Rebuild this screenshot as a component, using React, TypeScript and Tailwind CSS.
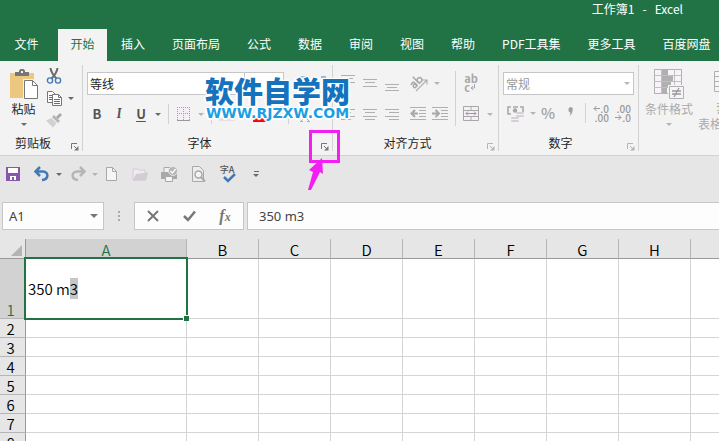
import React from 'react';

type IconProps = {
  children: React.ReactNode;
  w?: number;
  h?: number;
};

function Icon({ children, w = 16, h = 16 }: IconProps) {
  return <svg width={w} height={h} viewBox={`0 0 ${w} ${h}`} fill="none" className="shrink-0" aria-hidden="true">
      {children}
    </svg>;
}

function Caret({ className = 'text-[#6a6a6a]' }: { className?: string }) {
  return <svg width="6" height="3" viewBox="0 0 6 3" className={`shrink-0 ${className}`} aria-hidden="true">
      <path d="M0 0h6L3 3z" fill="currentColor" />
    </svg>;
}

type ToolProps = {
  label: string;
  className?: string;
  children: React.ReactNode;
};

function Tool({ label, className = 'w-[22px]', children }: ToolProps) {
  return <button type="button" aria-label={label} className={`flex h-6 shrink-0 items-center justify-center ${className}`}>
      {children}
    </button>;
}

function Divider() {
  return <div className="mx-1 h-5 w-px shrink-0 bg-[#d2d2d2]" />;
}

type GroupProps = {
  title: string;
  className: string;
  dim?: boolean;
  marker?: React.ReactNode;
  children: React.ReactNode;
};

function Group({ title, className, dim, marker, children }: GroupProps) {
  return <section aria-label={title} className={`flex shrink-0 flex-col border-r border-[#d2d2d2] ${className}`}>
      {children}
      <div className="mt-auto flex h-4 items-center">
        <span className="flex-1 text-center text-[#262626]">{title}</span>
        <button type="button" aria-label={`${title}设置`} className={`relative flex h-4 w-4 items-end justify-end pr-[3px] ${dim ? 'text-[#b5b5b5]' : 'text-[#777]'}`}>
          <Icon w={8} h={8}>
            <path d="M.5 6V.5H6" stroke="currentColor" />
            <path d="M3 3l3 3" stroke="currentColor" />
            <path d="M7.500 3v4.500H3z" fill="currentColor" />
          </Icon>
          {marker}
        </button>
      </div>
    </section>;
}

// frame and arrow pointing at the font dialog launcher
function Marker() {
  return <span className="pointer-events-none absolute -top-[5px] -left-[7px] z-20 block h-[33px] w-[31px] border-[3px] border-[#f31ef3]">
      <svg width="18" height="34" viewBox="0 0 18 34" className="absolute top-6 -left-1" aria-hidden="true">
        <path d="M14 1L15 17L12 15L3 33L0 33L5 15L1 13z" fill="#f31ef3" />
      </svg>
    </span>;
}

const tabs = ['插入', '页面布局', '公式', '数据', '审阅', '视图', '帮助', 'PDF工具集', '更多工具', '百度网盘'];

function TitleBar() {
  return <header className="bg-[#217346] text-white">
      <h1 className="flex h-[29px] justify-end gap-2 pr-9 leading-[18px]">
        <span>工作簿1</span>
        <span>-</span>
        <span>Excel</span>
      </h1>
      <nav className="flex h-8 gap-px overflow-hidden whitespace-nowrap">
        <button type="button" className="w-[57px] shrink-0 pr-1 pb-0.5">文件</button>
        <button type="button" className="w-[49px] shrink-0 bg-[#f3f3f3] pb-0.5 text-[#217346]">开始</button>
        {tabs.map(tab => <button type="button" key={tab} className="shrink-0 px-[13px] pb-0.5">
            {tab}
          </button>)}
      </nav>
    </header>;
}

function ClipboardGroup() {
  return <Group title="剪贴板" className="w-[83px]">
      <div className="flex items-start gap-1 pl-[9px]">
        <button type="button" className="flex w-[29px] flex-col items-center pt-1">
          <Icon w={29} h={31}>
            <path d="M1 4h24v25H1z" fill="#edc77f" />
            <path d="M6 7V3h4V1.500L11.500 0h3L16 1.500V3h4v4z" fill="#767676" />
            <path d="M12 2h2v2h-2z" fill="#f3f3f3" />
            <path d="M14 10h10l6 6v15H14z" fill="#f3f3f3" />
            <path d="M15.500 11.500h8l5 5v13h-13z" fill="#fff" stroke="#767676" />
            <path d="M23.500 11.500v5h5" stroke="#767676" />
          </Icon>
          <span className="leading-[18px] whitespace-nowrap text-[#262626]">粘贴</span>
          <span className="flex h-3 items-center"><Caret /></span>
        </button>
        <div className="flex flex-col">
          <Tool label="剪切" className="max-h-[22px] w-6">
            <Icon>
              <path d="M4.500 0c.5 4 2 6.500 6 10.500M11.500 0c-.5 4-2 6.500-6 10.500" stroke="#6a6a6a" strokeWidth="2" />
              <circle cx="4" cy="12.500" r="2.600" stroke="#4279b5" strokeWidth="1.400" />
              <circle cx="12" cy="12.500" r="2.600" stroke="#4279b5" strokeWidth="1.400" />
            </Icon>
          </Tool>
          <Tool label="复制" className="max-h-[22px] w-8 gap-1.5 pl-1">
            <Icon>
              <path d="M1.500 1.500h5l3 3v8h-8z" fill="#fff" stroke="#767676" />
              <path d="M3 5.500h4M3 7.500h4M3 9.500h4" stroke="#4279b5" />
              <path d="M6.500 4.500h6l3 3v8h-9z" fill="#fff" stroke="#767676" />
              <path d="M12.500 4.500v3h3" stroke="#767676" />
              <path d="M8 9.500h6M8 11.500h6M8 13.500h6" stroke="#4279b5" />
            </Icon>
            <Caret />
          </Tool>
          <Tool label="格式刷" className="max-h-[22px] w-6">
            <Icon>
              <path d="M14 1l2 2-4 4-2-2z" fill="#a8a8a8" />
              <path d="M8 3l6 6-2 2-6-6z" fill="#b5b5b5" />
              <path d="M5.500 6l5 5L7 15.500 0 8.500z" fill="#d3cfd3" />
            </Icon>
          </Tool>
        </div>
      </div>
    </Group>;
}

function FontGroup() {
  return <Group title="字体" className="w-[250px]" marker={<Marker />}>
      <div className="flex pt-[7px] pl-1">
        <input aria-label="字体" defaultValue="等线" className="h-[23px] w-[158px] border border-[#c6c6c6] bg-white px-0.5 text-[#262626] outline-none" />
        <input aria-label="字号" className="-ml-px h-[23px] w-10 border border-[#c6c6c6] bg-white px-1 outline-none" />
        <Tool label="增大字号" className="ml-2 w-5">
          <Icon><path d="M7 1h5" stroke="#4279b5" /></Icon>
        </Tool>
        <Tool label="减小字号" className="w-5">
          <Icon><path d="M7 1h5" stroke="#4279b5" /></Icon>
        </Tool>
      </div>
      <div className="flex items-center pt-1.5 pl-[3px] text-[13px] font-bold text-[#555]">
        <Tool label="加粗"><span>B</span></Tool>
        <Tool label="倾斜"><span className="font-serif italic">I</span></Tool>
        <Tool label="下划线"><span className="underline underline-offset-2">U</span></Tool>
        <Tool label="下划线样式" className="w-3"><Caret /></Tool>
        <Divider />
        <Tool label="边框" className="w-[22px]">
          <Icon w={14} h={14}>
            <path d="M1 1h12v11H1z" fill="#f5eef7" />
            <path d="M.5 0v13M6.500 0v13M12.500 0v13M0 .5h13M0 6.500h13" stroke="#a5a0a5" strokeDasharray="1 1" />
            <path d="M0 13.500h13" stroke="#999" />
          </Icon>
        </Tool>
        <Tool label="边框样式" className="w-3"><Caret className="text-[#b5b5b5]" /></Tool>
        <Divider />
        <Tool label="填充颜色">
          <Icon><path d="M0 12h16v3H0z" fill="#e3e0e5" /><path d="M7 3l5 5-4 3-4-4z" stroke="#bbb" /></Icon>
        </Tool>
        <Tool label="填充颜色列表" className="w-3"><span /></Tool>
        <Tool label="字体颜色">
          <Icon><path d="M0 12h16v4H0z" fill="#f00" /></Icon>
        </Tool>
        <Tool label="字体颜色列表" className="w-3"><span /></Tool>
        <Divider />
        <Tool label="拼音指南">
          <Icon><path d="M5 8h8M9 6v5M5 15l4-4 4 4M4 15.500h3M11 15.500h3" stroke="#b0b0b0" /></Icon>
        </Tool>
      </div>
    </Group>;
}

function Lines({ d }: { d: string }) {
  return <Icon><path d={d} stroke="#b0b0b0" /></Icon>;
}

function AlignGroup() {
  return <Group title="对齐方式" className="w-[166px]" dim>
      <div className="flex pt-1.5 pl-1">
        <div className="flex flex-col gap-[7px]">
          <div className="flex">
            <Tool label="顶端对齐"><Lines d="M1 .5h14M3 3.500h10M1 7.500h14" /></Tool>
            <Tool label="垂直居中"><Lines d="M1 4.500h14M3 7.500h10M1 11.500h14" /></Tool>
            <Tool label="底端对齐"><Lines d="M1 9.500h14M3 12.500h10M1 15.500h14" /></Tool>
            <Tool label="方向" className="ml-1 w-9 gap-1.5">
              <Icon w={18} h={18}>
                <g transform="rotate(-45 8 8)" stroke="#a8a8a8" strokeWidth="1.500">
                  <path d="M1 5.500c1-1.500 4-1.500 4 1v4" />
                  <circle cx="3" cy="8.500" r="1.700" />
                  <path d="M8 .5v10" />
                  <circle cx="10.500" cy="7.700" r="2.400" />
                </g>
                <path d="M6 17L16.500 6.500M12.500 6h4.500v4.500" stroke="#b0b0b0" strokeWidth="1.200" />
              </Icon>
              <Caret className="text-[#b5b5b5]" />
            </Tool>
          </div>
          <div className="flex">
            <Tool label="左对齐"><Lines d="M1 3.500h14M1 6.500h10M1 10.500h14M1 13.500h10" /></Tool>
            <Tool label="居中"><Lines d="M1 3.500h14M3 6.500h10M1 10.500h14M3 13.500h10" /></Tool>
            <Tool label="右对齐"><Lines d="M1 3.500h14M5 6.500h10M1 10.500h14M5 13.500h10" /></Tool>
            <Tool label="减少缩进量" className="ml-1 w-[22px]">
              <Icon>
                <path d="M0 1.500h16M9 4.500h7M9 7.500h7M9 10.500h7M0 13.500h16" stroke="#b0b0b0" />
                <path d="M8 7.500H2M5 4L1.500 7.500 5 11" stroke="#a8a8a8" strokeWidth="2" />
              </Icon>
            </Tool>
            <Tool label="增加缩进量">
              <Icon>
                <path d="M0 1.500h16M9 4.500h7M9 7.500h7M9 10.500h7M0 13.500h16" stroke="#b0b0b0" />
                <path d="M0 7.500h6M3.500 4L7 7.500 3.500 11" stroke="#a8a8a8" strokeWidth="2" />
              </Icon>
            </Tool>
          </div>
        </div>
        <div className="ml-1 h-[55px] w-px bg-[#d2d2d2]" />
        <div className="flex flex-col gap-[7px] pl-1">
          <Tool label="自动换行" className="w-[22px]">
            <span className="flex flex-col items-start text-[11px] leading-[9px] font-bold text-[#a8a8a8]">
              <span>ab</span>
              <span className="flex items-center">
                c
                <Icon w={6} h={7}><path d="M4.500 0v4H1M3 2L1 4l2 2" stroke="currentColor" /></Icon>
              </span>
            </span>
          </Tool>
          <Tool label="合并后居中" className="w-9 gap-2">
            <Icon>
              <path d="M.5 .5h15v14H.5zM.5 4.500h15M.5 10.500h15M8 .5v4M8 10.500v4" fill="#f5f0f6" stroke="#a8a8a8" />
              <path d="M3 7.500h10M5 5.500l-2 2 2 2M11 5.500l2 2-2 2" stroke="#999" />
            </Icon>
            <Caret className="text-[#b5b5b5]" />
          </Tool>
        </div>
      </div>
    </Group>;
}

function Decimal({ more }: { more?: boolean }) {
  const arrow = more ? 'M7 3.500H1M3.500 1L1 3.500 3.500 6' : 'M0 3.500h6M3.500 1L6 3.500 3.500 6';
  return <span className="flex flex-col items-end text-[10px] leading-[9px] font-medium text-[#999]">
      <span className="flex items-center">
        {more && <Icon w={7} h={7}><path d={arrow} stroke="currentColor" /></Icon>}
        {more ? '.0' : '.00'}
      </span>
      <span className="flex items-center">
        {!more && <Icon w={7} h={7}><path d={arrow} stroke="currentColor" /></Icon>}
        {more ? '.00' : '.0'}
      </span>
    </span>;
}

function NumberGroup() {
  return <Group title="数字" className="w-[140px]" dim>
      <div className="relative mt-[7px] ml-1 flex w-[131px] items-center">
        <select aria-label="数字格式" className="h-[23px] w-full appearance-none border border-[#c6c6c6] bg-white px-0.5 text-[#999] outline-none">
          <option>常规</option>
        </select>
        <span className="pointer-events-none absolute right-1"><Caret className="text-[#b5b5b5]" /></span>
      </div>
      <div className="flex items-center pt-1.5 pl-1.5">
        <Tool label="会计数字格式" className="w-8 gap-1.5">
          <Icon w={17} h={17}>
            <path d="M1 7V2h3M13 2h3v5M1 6v3h3M6 2h5" stroke="#a8a8a8" strokeWidth="1.600" />
            <circle cx="8" cy="5.500" r="2.200" fill="#a8a8a8" />
            <path d="M10 8h6M10 11h6M5 13h6M5 16h6" stroke="#d6ced8" strokeWidth="2" strokeLinecap="round" />
          </Icon>
          <Caret className="text-[#b5b5b5]" />
        </Tool>
        <Tool label="百分比样式"><span className="text-[15px] font-medium text-[#a0a0a0]">%</span></Tool>
        <Tool label="千位分隔样式">
          <Icon>
            <path d="M6.500 4a2.200 2.200 0 1 1 4 1.500C10.500 8 9.500 10 7 11c1-1 1.500-2 1.500-3.500C7.500 7.500 6 6 6.500 4z" fill="#a0a0a0" />
          </Icon>
        </Tool>
        <Divider />
        <Tool label="增加小数位数"><Decimal more /></Tool>
        <Tool label="减少小数位数"><Decimal /></Tool>
      </div>
    </Group>;
}

function StylesGroup() {
  return <section aria-label="样式" className="flex items-start gap-[5px] pt-1 pl-1.5 whitespace-nowrap text-[#aaa]">
      <button type="button" className="flex shrink-0 flex-col items-center">
        <Icon w={31} h={31}>
          <path d="M.5.5h27v24H.5z" fill="#f8f3f9" stroke="#b0b0b0" />
          <path d="M8 1h6v5H8zM8 7h11v5H8zM8 13h9v5H8zM8 19h5v5H8z" fill="#b0b0b0" />
          <path d="M0 6.500h28M0 12.500h28M0 18.500h28M7.500 0v25M20.500 0v25" stroke="#c0c0c0" />
          <path d="M14 16h17v15H14z" fill="#f3f3f3" />
          <path d="M15.500 17.500h14v12h-14z" fill="#f8f3f9" stroke="#b0b0b0" />
          <path d="M18 22h9M18 25h9M25 19l-5 9" stroke="#999" strokeWidth="1.300" />
        </Icon>
        <span className="leading-[18px]">条件格式</span>
        <span className="flex h-3 items-center"><Caret className="text-[#b5b5b5]" /></span>
      </button>
      <button type="button" className="flex shrink-0 flex-col items-center">
        <Icon w={28} h={31}>
          <path d="M.5 2.500h27v20H.5zM.5 7.500h27M.5 12.500h27M.5 17.500h27M7.500 2v20M14.500 2v20M21.500 2v20" fill="#f8f3f9" stroke="#b0b0b0" />
        </Icon>
        <span className="leading-[16px]">套用</span>
        <span className="flex items-center gap-1.5 leading-[16px]">
          表格格式
          <Caret className="text-[#b5b5b5]" />
        </span>
      </button>
    </section>;
}

function Watermark() {
  return <div className="pointer-events-none absolute top-[13px] left-[205px] z-10 flex flex-col items-center whitespace-nowrap [text-shadow:1px_1px_1px_#fff,-1px_-1px_1px_#fff,1px_-1px_1px_#fff,-1px_1px_1px_#fff,2px_0_1px_#fff,-2px_0_1px_#fff,0_2px_1px_#fff]">
      <span className="text-[29px] leading-8 font-black text-[#1572bd]">软件自学网</span>
      <span className="font-['DejaVu_Sans'] text-[14px] leading-[14px] font-bold text-[#1b9fe4]">WWW.RJZXW.COM</span>
    </div>;
}

function Ribbon() {
  return <div className="relative flex border-b border-[#d2d2d2] bg-[#f3f3f3] py-1">
      <ClipboardGroup />
      <FontGroup />
      <AlignGroup />
      <NumberGroup />
      <div className="min-h-[86px] min-w-0 flex-1 overflow-hidden">
        <StylesGroup />
      </div>
      <Watermark />
    </div>;
}

function QuickAccess() {
  return <div className="flex items-center pt-1.5 pb-4 pl-0.5">
      <Tool label="保存">
        <Icon>
          <path d="M1 1h14v14H1z" fill="#8a56ad" />
          <path d="M3 2h10v5H3zM5 10h6v4H9v-3H7v3H5z" fill="#fff" />
        </Icon>
      </Tool>
      <Tool label="撤消" className="ml-2 w-8 gap-1.5">
        <Icon>
          <path d="M6 1L1.500 5.500 6 10" stroke="#3f79b7" strokeWidth="2.500" />
          <path d="M2 5.500h7c6 0 6 8-1 8.500" stroke="#3f79b7" strokeWidth="2.500" />
        </Icon>
        <Caret />
      </Tool>
      <Tool label="恢复" className="ml-1 w-8 gap-1.5">
        <Icon>
          <path d="M10 1l4.500 4.500L10 10" stroke="#b5b5b5" strokeWidth="2.500" />
          <path d="M14 5.500H7c-6 0-6 8 1 8.500" stroke="#b5b5b5" strokeWidth="2.500" />
        </Icon>
        <Caret className="text-[#b5b5b5]" />
      </Tool>
      <Tool label="新建">
        <Icon>
          <path d="M3.500 1.500h6l4 4v9h-10z" fill="#f8f3f9" stroke="#a8a8a8" />
          <path d="M9.500 1.500v4h4" stroke="#a8a8a8" />
        </Icon>
      </Tool>
      <Tool label="打开" className="ml-[7px] w-[22px]">
        <Icon>
          <path d="M1 14V3h5l1 1h6v10z" fill="#efe9f0" stroke="#d2ccd3" />
          <path d="M1 14.500L4 8l12-1.500-2 8z" fill="#d2ccd3" />
        </Icon>
      </Tool>
      <Tool label="打印" className="ml-[7px] w-[22px]">
        <Icon w={17} h={17}>
          <path d="M3 1.500h8V7H3z" fill="#f3edf4" stroke="#a8a8a8" />
          <path d="M0 6h16v7H0z" fill="#a8a8a8" />
          <path d="M4.500 10.500h7v5h-7z" fill="#f8f3f9" stroke="#a8a8a8" />
          <circle cx="12" cy="5" r="4.500" fill="#b5b5b5" stroke="#e6e6e6" />
          <path d="M9.500 5l2 2 3-4" stroke="#fff" strokeWidth="1.300" />
        </Icon>
      </Tool>
      <Tool label="打印预览" className="ml-[7px] w-[22px]">
        <Icon>
          <path d="M2.500 15.500v-15h7l4 4v11z" fill="#efeaf0" stroke="#a8a8a8" />
          <circle cx="8.500" cy="8.500" r="3.500" fill="#f3f3f3" stroke="#a8a8a8" strokeWidth="1.500" />
          <path d="M11 11l4 4.500" stroke="#a8a8a8" strokeWidth="2" />
        </Icon>
      </Tool>
      <Tool label="拼写检查" className="ml-[7px] w-[22px]">
        <span className="relative flex h-[18px] text-[9px] leading-[9px] font-medium text-[#555]">
          字A
          <svg width="14" height="10" viewBox="0 0 14 10" fill="none" className="absolute bottom-0 left-0.5" aria-hidden="true">
            <path d="M2 4l4 4 7-7" stroke="#3f79b7" strokeWidth="2.500" />
          </svg>
        </span>
      </Tool>
      <Tool label="自定义快速访问工具栏" className="ml-[7px] w-[22px] flex-col gap-0.5">
        <span className="h-px w-[5px] bg-[#6a6a6a]" />
        <Caret />
      </Tool>
    </div>;
}

function FormulaBar() {
  return <div className="flex pl-0.5 font-['Noto_Sans','Noto_Sans_CJK_SC',sans-serif] text-[13px] text-[#444]">
      <div className="relative flex items-center">
        <input aria-label="名称框" defaultValue="A1" className="h-7 w-[102px] border border-[#c6c6c6] bg-[#fdfdfd] px-1.5 outline-none" />
        <svg width="8" height="4" viewBox="0 0 8 4" className="pointer-events-none absolute right-1.5" aria-hidden="true">
          <path d="M0 0h8L4 4z" fill="#777" />
        </svg>
      </div>
      <div className="flex w-[30px] flex-col items-center justify-center gap-0.5">
        <span className="h-0.5 w-0.5 bg-[#aaa]" />
        <span className="h-0.5 w-0.5 bg-[#aaa]" />
        <span className="h-0.5 w-0.5 bg-[#aaa]" />
      </div>
      <div className="flex h-7 w-[110px] items-center justify-around border border-[#c6c6c6] bg-[#fdfdfd]">
        <Tool label="取消">
          <Icon w={12} h={12}><path d="M1 1l10 10M11 1L1 11" stroke="#777" strokeWidth="2" /></Icon>
        </Tool>
        <Tool label="输入">
          <Icon w={13} h={12}><path d="M1 6l4 4 7-8.500" stroke="#777" strokeWidth="2.500" /></Icon>
        </Tool>
        <Tool label="插入函数">
          <span className="font-['Liberation_Serif'] text-base leading-4 font-bold text-[#777] italic">f<span className="text-xs">x</span></span>
        </Tool>
      </div>
      <input aria-label="编辑栏" defaultValue="350 m3" className="ml-[3px] h-7 min-w-0 flex-1 border border-r-0 border-[#c6c6c6] bg-[#fdfdfd] px-[11px] pb-px outline-none" />
    </div>;
}

const columns = ['B', 'C', 'D', 'E', 'F', 'G', 'H', 'I', 'J', 'K', 'L', 'M', 'N'];
const rows = Array.from({ length: 20 }, (_, i) => i + 2);

function Sheet() {
  return <main className="min-h-0 flex-1 overflow-hidden pt-[9px]">
      <table className="w-px table-fixed border-separate border-spacing-0 bg-white text-[15px] leading-4 font-[350] text-black">
        <colgroup>
          <col className="w-[26px]" />
          <col className="w-[161px]" />
          {columns.map(col => <col key={col} className="w-[72px]" />)}
        </colgroup>
        <thead>
          <tr className="h-5 bg-[#e6e6e6]">
            <td className="border-r border-b border-[#999] p-0">
              <svg width="11" height="11" viewBox="0 0 11 11" className="mt-1 mr-[3px] ml-auto" aria-hidden="true">
                <path d="M11 0v11H0z" fill="#b4b4b4" />
              </svg>
            </td>
            <th scope="col" className="border-r border-b border-r-[#b5b5b5] border-b-[#999] bg-[#d2d2d2] p-0 pt-[3px] font-[350] text-[#217346]">A</th>
            {columns.map(col => <th scope="col" key={col} className="border-r border-b border-r-[#b5b5b5] border-b-[#999] p-0 pt-[3px] font-[350]">{col}</th>)}
          </tr>
        </thead>
        <tbody>
          <tr className="h-[60px]">
            <th scope="row" className="border-r border-b border-r-[#999] border-b-[#b5b5b5] bg-[#d2d2d2] p-0 pr-1 align-bottom font-[350] text-[#217346]">1</th>
            <td className="relative border-r border-b border-[#d4d4d4] px-0.5 py-0">
              350 m<span className="bg-[#c6c6c6]">3</span>
              <span className="pointer-events-none absolute -inset-0.5 border-2 border-[#217346]">
                <span className="absolute -right-[3px] -bottom-[3px] h-1.5 w-1.5 border-t border-l border-white bg-[#217346]" />
              </span>
            </td>
            {columns.map(col => <td key={col} className="border-r border-b border-[#d4d4d4] p-0" />)}
          </tr>
          {rows.map(row => <tr key={row} className="h-[19px]">
              <th scope="row" className="border-r border-b border-r-[#999] border-b-[#b5b5b5] bg-[#e6e6e6] p-0 pt-0.5 pr-1 font-[350]">{row}</th>
              <td className="border-r border-b border-[#d4d4d4] p-0" />
              {columns.map(col => <td key={col} className="border-r border-b border-[#d4d4d4] p-0" />)}
            </tr>)}
        </tbody>
      </table>
    </main>;
}

export default function App() {
  return <div className="flex h-screen flex-col overflow-hidden bg-[#e6e6e6] font-['Noto_Sans_CJK_SC','Noto_Sans',sans-serif] text-xs">
      <TitleBar />
      <Ribbon />
      <QuickAccess />
      <FormulaBar />
      <Sheet />
    </div>;
}
